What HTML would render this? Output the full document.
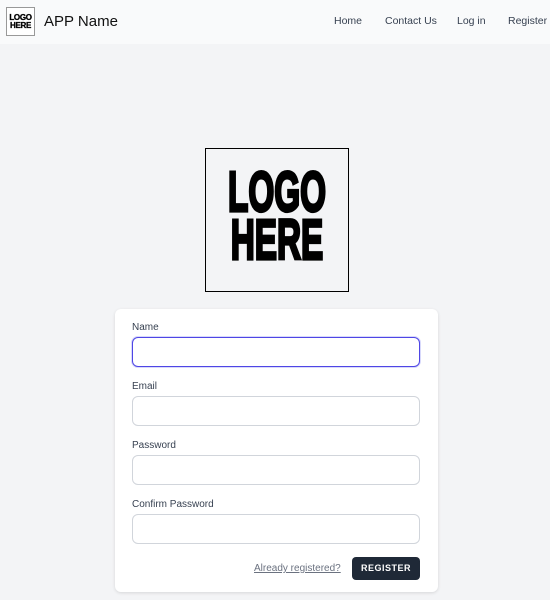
<!DOCTYPE html>
<html><head><meta charset="utf-8"><style>
*{box-sizing:border-box;margin:0;padding:0}
body{width:550px;height:600px;background:#f3f4f6;font-family:"Liberation Sans",sans-serif;position:relative;overflow:hidden}
.hdr{position:absolute;left:0;top:0;width:550px;height:44px;background:#f9fafb}
.slogo{position:absolute;left:6px;top:7px;width:29px;height:29px;border:1px solid #999;background:#fff;font:bold 8px/8px "Liberation Sans Narrow","Liberation Sans",sans-serif;text-align:center;padding-top:6px;letter-spacing:-0.3px;-webkit-text-stroke:0.3px #000}
.app{position:absolute;left:44px;top:13px;font-size:15px;color:#111}
.nav{position:absolute;top:15px;font-size:10.5px;color:#374151}
.big{position:absolute;left:205px;top:148px;width:144px;height:144px;border:1.5px solid #000;background:#f3f4f6;text-align:center;font:bold 45px/34px "Liberation Sans Narrow","Liberation Sans",sans-serif;padding-top:26px;color:#000}
.big span{display:block;transform:scaleX(0.74) scaleY(1.25);margin-bottom:14px;-webkit-text-stroke:2.5px #000}
.card{position:absolute;left:115px;top:309px;width:323px;height:283px;background:#fff;border-radius:6px;box-shadow:0 1px 3px rgba(0,0,0,.12)}
.lbl{position:absolute;left:132px;font-size:10px;color:#374151}
.inp{position:absolute;left:132px;width:288px;height:30px;border:1px solid #d1d5db;border-radius:6px;background:#fff}
.inp.f{border:1.5px solid #4f46e5;box-shadow:0 0 0 1px rgba(99,102,241,.25)}
.link{position:absolute;left:254px;top:563px;font-size:10px;color:#6b7280;text-decoration:underline}
.btn{position:absolute;left:352px;top:557px;width:68px;height:23px;background:#1f2937;border-radius:4px;color:#fff;font-size:9px;font-weight:bold;letter-spacing:.5px;text-align:center;line-height:23px}
</style></head><body>
<div class="hdr"></div>
<div class="slogo">LOGO<br>HERE</div>
<div class="app">APP Name</div>
<div class="nav" style="left:334px">Home</div>
<div class="nav" style="left:385px">Contact Us</div>
<div class="nav" style="left:457px">Log in</div>
<div class="nav" style="left:508px">Register</div>
<div class="big"><span>LOGO</span><span>HERE</span></div>
<div class="card"></div>
<div class="lbl" style="top:322px">Name</div>
<div class="inp f" style="top:337px"></div>
<div class="lbl" style="top:381px">Email</div>
<div class="inp" style="top:396px"></div>
<div class="lbl" style="top:440px">Password</div>
<div class="inp" style="top:455px"></div>
<div class="lbl" style="top:499px">Confirm Password</div>
<div class="inp" style="top:514px"></div>
<div class="link">Already registered?</div>
<div class="btn">REGISTER</div>
</body></html>
